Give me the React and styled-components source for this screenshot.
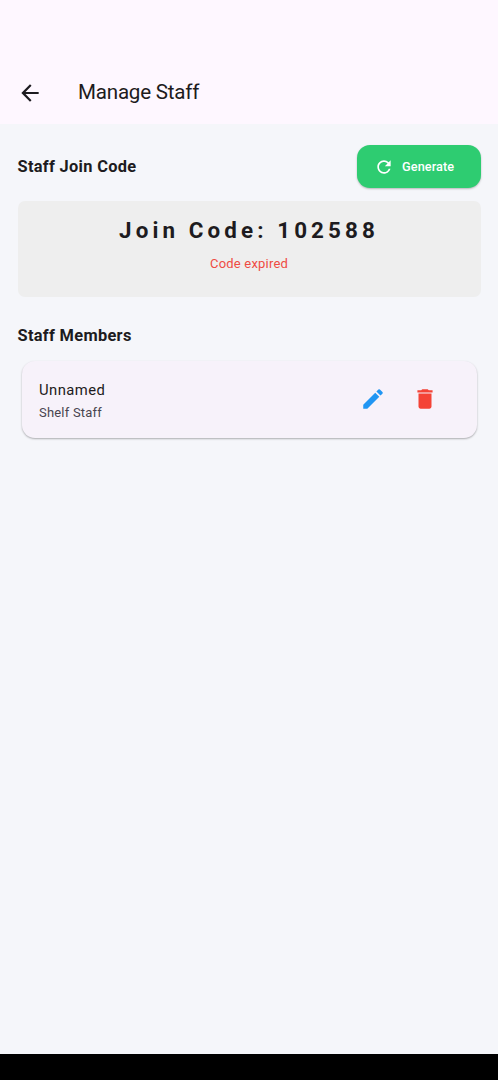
import React from 'react';
import styled, { createGlobalStyle } from 'styled-components';
import { MdArrowBack, MdRefresh, MdEdit, MdDelete } from 'react-icons/md';

const Global = createGlobalStyle`
  * { box-sizing: border-box; }
  body { margin: 0; font-family: Roboto, "Liberation Sans", sans-serif; color: #1d1b20; }
`;
const Screen = styled.div`
  height: 1080px;
  display: flex;
  flex-direction: column;
  background: #f5f6fa;
`;
const AppBar = styled.header`
  height: 124px;
  padding: 61px 17.4px 0;
  display: flex;
  align-items: center;
  gap: 34.6px;
  background: #fef7ff;
`;
const IconButton = styled.button`
  border: 0;
  padding: 0;
  background: none;
  display: flex;
  color: ${(p) => p.$color};
  font-size: ${(p) => p.$size}px;
`;
const Title = styled.h1`
  margin: 0;
  font-size: 20.6px;
  letter-spacing: -0.22px;
  padding-bottom: 1px;
  line-height: 26px;
  font-weight: 400;
`;
const Content = styled.main`
  flex: 1;
  padding: 21px 17.5px 0;
`;
const SectionHead = styled.div`
  height: 43px;
  display: flex;
  align-items: center;
  justify-content: space-between;
`;
const Heading = styled.h2`
  margin: 0;
  font-size: 16.4px;
  line-height: 22px;
  font-weight: 700;
  letter-spacing: 0.31px;
`;
const Generate = styled.button`
  width: 124px;
  height: 43px;
  border: 0;
  border-radius: 13px;
  padding: 0 0 0 17px;
  display: flex;
  align-items: center;
  gap: 8.5px;
  background: #2ecc71;
  color: #fff;
  font: 500 12.7px Roboto, sans-serif;
  letter-spacing: 0.1px;
  box-shadow: 0 1px 2px rgba(0, 0, 0, 0.25);
  svg { font-size: 20px; }
`;
const CodePanel = styled.section`
  height: 96px;
  margin: 13px 0 28px;
  padding-top: 14px;
  border-radius: 7px;
  background: #eee;
  text-align: center;
`;
const Code = styled.div`
  font-size: 22.4px;
  line-height: 30px;
  font-weight: 700;
  letter-spacing: 4.1px;
`;
const Expired = styled.div`
  margin-top: 10px;
  font-size: 13px;
  line-height: 18px;
  letter-spacing: 0.2px;
  color: #ef4b43;
`;
const MemberCard = styled.article`
  height: 77px;
  margin: 14px 4px 0;
  padding: 0 39px 2px 17.5px;
  display: flex;
  align-items: center;
  justify-content: space-between;
  border-radius: 13px;
  background: #f7f2fa;
  box-shadow: 0 1px 2px rgba(0, 0, 0, 0.3);
`;
const Member = styled.div`
  padding-top: 3px;
`;
const Name = styled.div`
  font-size: 14.8px;
  line-height: 22px;
  letter-spacing: 0.45px;
`;
const Role = styled.div`
  margin-top: 2px;
  font-size: 13px;
  line-height: 19px;
  letter-spacing: 0.2px;
  color: #49454f;
`;
const Actions = styled.div`
  display: flex;
  gap: 26px;
`;
const NavigationBar = styled.footer`
  height: 26px;
  background: #000;
`;

export default function App() {
  return (
    <Screen>
      <Global />
      <AppBar>
        <IconButton aria-label="Back" $color="#1d1b20" $size={26}><MdArrowBack /></IconButton>
        <Title>Manage Staff</Title>
      </AppBar>
      <Content>
        <SectionHead>
          <Heading>Staff Join Code</Heading>
          <Generate><MdRefresh />Generate</Generate>
        </SectionHead>
        <CodePanel>
          <Code>Join Code: 102588</Code>
          <Expired>Code expired</Expired>
        </CodePanel>
        <Heading>Staff Members</Heading>
        <MemberCard>
          <Member>
            <Name>Unnamed</Name>
            <Role>Shelf Staff</Role>
          </Member>
          <Actions>
            <IconButton aria-label="Edit" $color="#2196f3" $size={26}><MdEdit /></IconButton>
            <IconButton aria-label="Delete" $color="#f44336" $size={26}><MdDelete /></IconButton>
          </Actions>
        </MemberCard>
      </Content>
      <NavigationBar />
    </Screen>
  );
}
